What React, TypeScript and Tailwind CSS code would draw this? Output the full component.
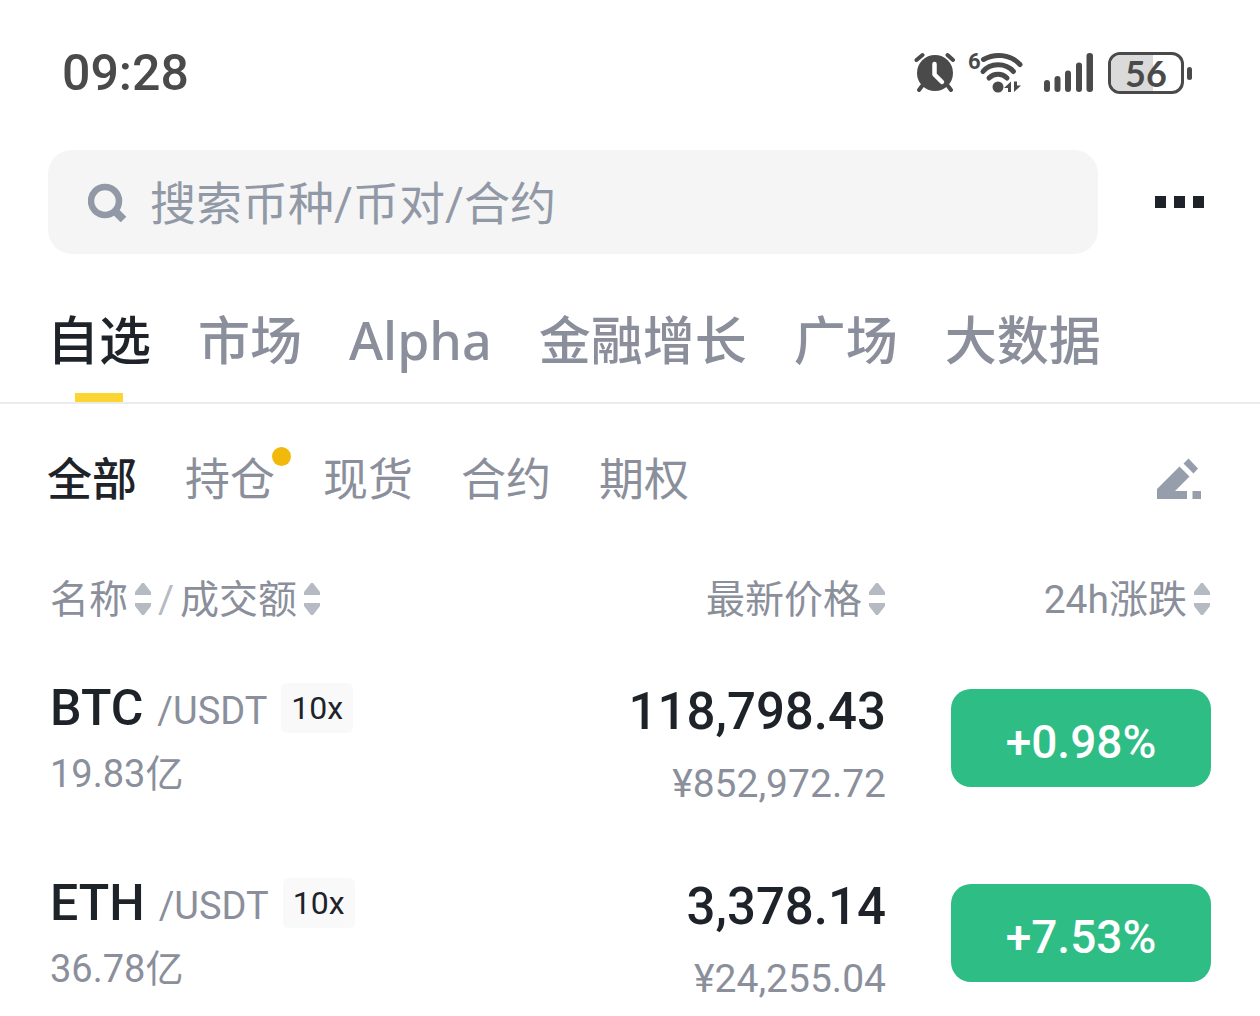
import React, { useState } from "react";

interface Pair {
  base: string;
  quote: string;
  leverage: string;
  volume: string;
  price: string;
  cny: string;
  change: string;
}

const TABS = ["自选", "市场", "Alpha", "金融增长", "广场", "大数据"];

const FILTERS = [
  { label: "全部" },
  { label: "持仓", dot: true },
  { label: "现货" },
  { label: "合约" },
  { label: "期权" },
];

const PAIRS: Pair[] = [
  {
    base: "BTC",
    quote: "/USDT",
    leverage: "10x",
    volume: "19.83亿",
    price: "118,798.43",
    cny: "¥852,972.72",
    change: "+0.98%",
  },
  {
    base: "ETH",
    quote: "/USDT",
    leverage: "10x",
    volume: "36.78亿",
    price: "3,378.14",
    cny: "¥24,255.04",
    change: "+7.53%",
  },
];

// --- Icons ---

const AlarmIcon = () => (
  <svg width="42" height="42" viewBox="0 0 42 42" fill="none" aria-hidden="true">
    <g stroke="#4a4a4a" strokeWidth="4" strokeLinecap="round">
      <path d="M2.5 8 8.500 3M33.500 3l5.500 5M8 34l-3 4M34 34l3 4" />
    </g>
    <circle cx="21" cy="21" r="18" fill="#4a4a4a" />
    <path
      d="M20.500 12v10.500l7.500 7.500"
      stroke="#fff"
      strokeWidth="4.500"
      strokeLinecap="round"
      strokeLinejoin="round"
    />
  </svg>
);

const WifiIcon = () => (
  <div className="relative h-[42px] w-[56px]">
    <span className="absolute left-0 top-[-2px] font-['Roboto'] text-[22px] font-bold leading-[24px]">
      6
    </span>
    <svg width="56" height="42" viewBox="0 0 56 42" fill="none" aria-hidden="true">
      <g stroke="#4a4a4a" strokeWidth="5" strokeLinecap="round">
        <path d="M15.500 7.500C27 1 42 2 52 12.500" />
        <path d="M15 19.500C22 11 37 10 45.500 19.500" />
        <path d="M21 26C26 21 34 21 39 26" />
      </g>
      <circle cx="30" cy="35" r="5.500" fill="#4a4a4a" />
      <path d="M36 36l7-6.500V40h-3v-4zM53 33.500L46 40V29.500h3v4z" fill="#4a4a4a" />
    </svg>
  </div>
);

const SignalIcon = () => (
  <svg width="50" height="40" viewBox="0 0 50 40" fill="#4a4a4a" aria-hidden="true">
    <rect x="0" y="27" width="6" height="12" rx="3" />
    <rect x="10.500" y="23" width="6" height="16" rx="3" />
    <rect x="21" y="17.500" width="6" height="21.500" rx="3" />
    <rect x="32" y="9.500" width="6" height="29.500" rx="3" />
    <rect x="42.500" y="0" width="6.500" height="39" rx="3" />
  </svg>
);

const Battery = () => (
  <div className="flex items-center gap-[3px]">
    <div className="relative flex h-[42px] w-[76px] items-center justify-center overflow-hidden rounded-[12px] border-[3px] border-[#4a4a4a]">
      <div className="absolute inset-y-0 left-0 w-[60%] bg-[#dadada]" />
      <span className="relative font-['Lato'] text-[36px] font-bold leading-none">56</span>
    </div>
    <div className="h-[13px] w-[5px] rounded-full bg-[#4a4a4a]" />
  </div>
);

const SearchIcon = () => (
  <svg width="40" height="40" viewBox="0 0 40 40" fill="none" aria-hidden="true">
    <circle cx="17" cy="19" r="14" stroke="#9299a6" strokeWidth="6.500" />
    <path d="M27 29l8.500 8.500" stroke="#9299a6" strokeWidth="8" />
  </svg>
);

const EditIcon = () => (
  <svg width="44" height="42" viewBox="0 0 44 42" fill="#979eab" aria-hidden="true">
    <path d="M0 41V31L22.500 8.500 32.500 18.500 18 33H30v8z" />
    <path d="M26.500 5.500 31.500 0.500 41 10.500 36.500 15.500zM35.500 33H44v8h-8.500z" />
  </svg>
);

const SortIcon = () => (
  <svg width="18" height="36" viewBox="0 0 18 36" fill="#b5bac3" aria-hidden="true">
    <path d="M1 13V10L8 1h2l7 9v3zM1 21v3l7 9h2l7-9v-3z" />
  </svg>
);

const SortButton: React.FC<{ label: string }> = ({ label }) => (
  <button type="button" className="flex items-center gap-1.5">
    {label}
    <SortIcon />
  </button>
);

// --- Sections ---

const StatusBar = () => (
  <div className="flex h-[146px] items-center justify-between pl-[62px] pr-[68px] text-[#4a4a4a]">
    <span className="font-['Roboto'] text-[50px] font-medium leading-[60px]">09:28</span>
    <div className="flex items-center">
      <AlarmIcon />
      <div className="ml-3">
        <WifiIcon />
      </div>
      <div className="ml-5">
        <SignalIcon />
      </div>
      <div className="ml-3.5">
        <Battery />
      </div>
    </div>
  </div>
);

const SearchBar = () => (
  <div className="flex items-center gap-[57px] pl-12 pr-14 pt-1">
    <label className="flex h-[104px] flex-1 items-center gap-[22px] rounded-3xl bg-[#f5f5f5] pl-10 pr-6">
      <SearchIcon />
      <input
        type="search"
        aria-label="搜索"
        placeholder="搜索币种/币对/合约"
        className="h-[72px] min-w-0 flex-1 bg-transparent pt-1 font-['Roboto','Noto_Sans_CJK_SC',sans-serif] text-[46px] leading-[68px] outline-none placeholder:text-[#9299a6]"
      />
    </label>
    <button type="button" aria-label="更多" className="flex gap-2">
      <span className="h-3 w-[11px] bg-[#1e2329]" />
      <span className="h-3 w-[11px] bg-[#1e2329]" />
      <span className="h-3 w-[11px] bg-[#1e2329]" />
    </button>
  </div>
);

const PairRow: React.FC<{ pair: Pair }> = ({ pair }) => (
  <tr className="h-[195px] align-top">
    <td className="pt-[52px]">
      <div className="flex h-[60px] items-center">
        <span className="text-[50px] font-medium leading-[60px] text-[#1e2329]">{pair.base}</span>
        <span className="ml-3.5 pt-1.5 text-[38px] leading-[48px] text-[#8a8f9b]">{pair.quote}</span>
        <span className="ml-3.5 rounded-md bg-[#f9f9f9] px-2.5 text-[32px] leading-[50px] text-[#1e2329]">
          {pair.leverage}
        </span>
      </div>
      <div className="mt-3 h-12 text-[38px] leading-[48px] text-[#8a8f9b]">{pair.volume}</div>
    </td>
    <td className="pt-[54px] text-right">
      <div className="text-[51px] font-medium leading-[64px] text-[#1e2329]">{pair.price}</div>
      <div className="mt-4 text-[39px] leading-[48px] text-[#8a8f9b]">{pair.cny}</div>
    </td>
    <td className="pl-[65px] pt-[63px]">
      <button
        type="button"
        className="flex h-[98px] w-full items-center justify-center rounded-[20px] bg-[#2ebd85] pt-2 text-[46px] font-medium leading-[60px] text-white"
      >
        {pair.change}
      </button>
    </td>
  </tr>
);

const App = () => {
  const [tab, setTab] = useState("自选");
  const [filter, setFilter] = useState("全部");

  return (
    <div className="min-h-screen bg-white font-['Noto_Sans','Noto_Sans_CJK_SC',sans-serif]">
      <StatusBar />
      <SearchBar />

      <nav className="flex gap-[47px] border-b-2 border-[#eaebed] px-[47px] pt-14">
        {TABS.map((name) => (
          <button
            key={name}
            type="button"
            onClick={() => setTab(name)}
            className={`relative whitespace-nowrap pb-8 text-[52px] font-medium leading-[60px] ${
              name === tab ? "text-[#1e2329]" : "text-[#8a8f9b]"
            }`}
          >
            {name}
            {name === tab && (
              <span className="absolute bottom-0 left-1/2 h-[9px] w-12 -translate-x-1/2 bg-[#fcd535]" />
            )}
          </button>
        ))}
      </nav>

      <div className="flex h-[150px] items-center justify-between pl-[47px] pr-[59px]">
        <div className="flex gap-12">
          {FILTERS.map(({ label, dot }) => (
            <button
              key={label}
              type="button"
              onClick={() => setFilter(label)}
              className={`relative whitespace-nowrap text-[45px] leading-[60px] ${
                label === filter ? "font-medium text-[#1e2329]" : "text-[#8a8f9b]"
              }`}
            >
              {label}
              {dot && (
                <span className="absolute -right-4 -top-0.5 size-[19px] rounded-full bg-[#f0b90b]" />
              )}
            </button>
          ))}
        </div>
        <button type="button" aria-label="编辑">
          <EditIcon />
        </button>
      </div>

      <div className="pl-[50px] pr-[49px] font-['Roboto','Noto_Sans_CJK_SC',sans-serif]">
        <table className="w-full">
          <thead className="text-[39px] leading-[48px] text-[#8a8f9b]">
            <tr className="h-[72px]">
              <th className="pb-0.5 pt-[22px] font-normal">
                <div className="flex h-12 items-center gap-1.5">
                  <SortButton label="名称" />
                  <span className="text-[#b5bac3]">/</span>
                  <SortButton label="成交额" />
                </div>
              </th>
              <th className="pb-0.5 pt-[22px] font-normal">
                <div className="flex h-12 items-center justify-end">
                  <SortButton label="最新价格" />
                </div>
              </th>
              <th className="w-[325px] pb-0.5 pt-[22px] font-normal">
                <div className="flex h-12 items-center justify-end">
                  <SortButton label="24h涨跌" />
                </div>
              </th>
            </tr>
          </thead>
          <tbody>
            {PAIRS.map((pair) => (
              <PairRow key={pair.base} pair={pair} />
            ))}
          </tbody>
        </table>
      </div>
    </div>
  );
};

export default App;
